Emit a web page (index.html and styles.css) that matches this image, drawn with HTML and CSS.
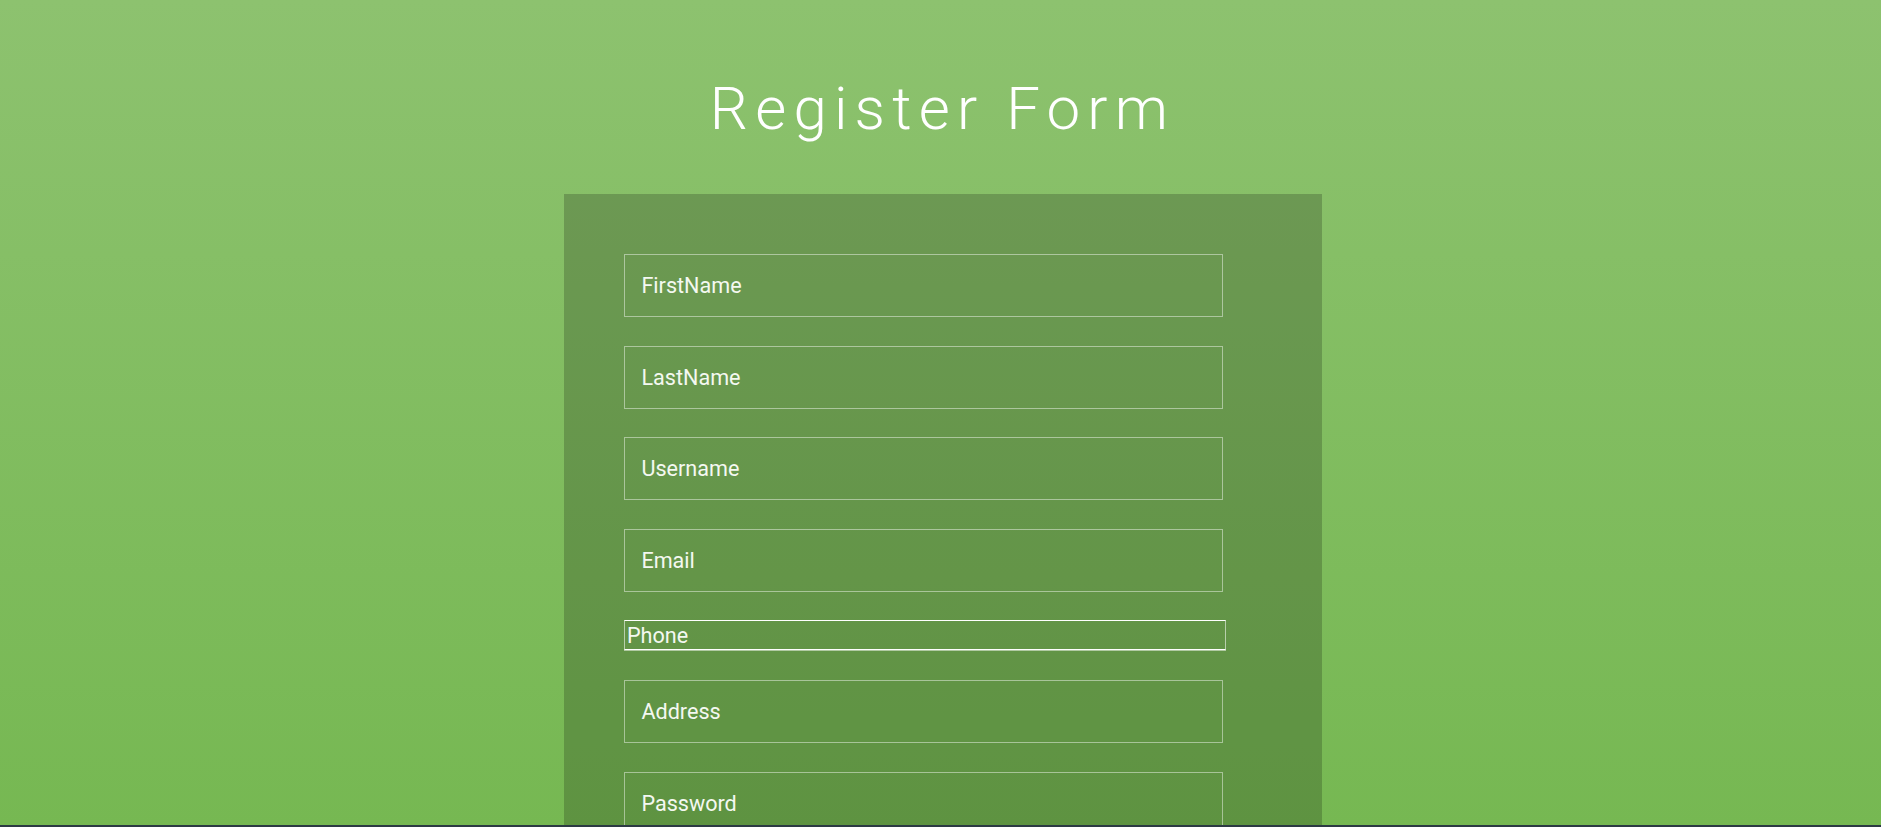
FILE: index.html
```html
<!DOCTYPE html>
<html lang="en">
<head>
<meta charset="utf-8">
<title>Register Form</title>
<link rel="stylesheet" href="styles.css">
</head>
<body>
  <h1 class="title">Register Form</h1>
  <form class="register">
    <input class="field" type="text" placeholder="FirstName">
    <input class="field" type="text" placeholder="LastName">
    <input class="field" type="text" placeholder="Username">
    <input class="field" type="text" placeholder="Email">
    <input class="phone" type="tel" placeholder="Phone">
    <input class="field" type="text" placeholder="Address">
    <input class="field" type="password" placeholder="Password">
    <input class="field" type="password" placeholder="Confirm Password">
  </form>
  <div class="bottom-bar"></div>
</body>
</html>
```

FILE: styles.css
```css
html, body {
  margin: 0;
  padding: 0;
  height: 100%;
  overflow: hidden;
}

body {
  background: linear-gradient(to bottom, #8dc26f 0%, #76b852 100%);
  background-attachment: fixed;
  font-family: Roboto, "Liberation Sans", sans-serif;
  color: #fff;
  padding-top: 74px;
  box-sizing: border-box;
}

.title {
  margin: 0 0 50px;
  font-weight: 300;
  font-size: 60px;
  line-height: 70px;
  letter-spacing: 7.2px;
  text-align: center;
  padding-left: 4px;
  color: #fff;
}

.register {
  width: 758px;
  margin-left: calc(50% - 376.5px);
  box-sizing: border-box;
  padding: 60px 0 60px 60px;
  background: rgba(0, 0, 0, 0.2);
  display: flex;
  flex-direction: column;
  align-items: flex-start;
}

.field {
  width: 599px;
  height: 63px;
  box-sizing: border-box;
  margin: 0 0 28.5px;
  padding: 0 16.4px;
  border: 1px solid rgba(255, 255, 255, 0.45);
  background: transparent;
  font-family: Roboto, "Liberation Sans", sans-serif;
  font-weight: 400;
  font-size: 21.6px;
  color: #fff;
  outline: none;
}

.field::placeholder,
.phone::placeholder {
  color: #f4f8f1;
  opacity: 1;
}

.phone {
  width: 602px;
  box-sizing: border-box;
  margin: 0 0 30px;
  padding: 1px 2px;
  height: 30px;
  line-height: 26px;
  border: 1px solid rgba(255, 255, 255, 0.55);
  border-top-color: #fff;
  border-bottom-color: #fff;
  box-shadow: 0 1px 0 rgba(255, 255, 255, 0.5);
  background: transparent;
  font-family: Roboto, "Liberation Sans", sans-serif;
  font-weight: 400;
  font-size: 21.6px;
  color: #fff;
  outline: none;
}

.bottom-bar {
  position: fixed;
  left: 0;
  right: 0;
  bottom: 0;
  height: 2px;
  background: #2c3a44;
}
```
